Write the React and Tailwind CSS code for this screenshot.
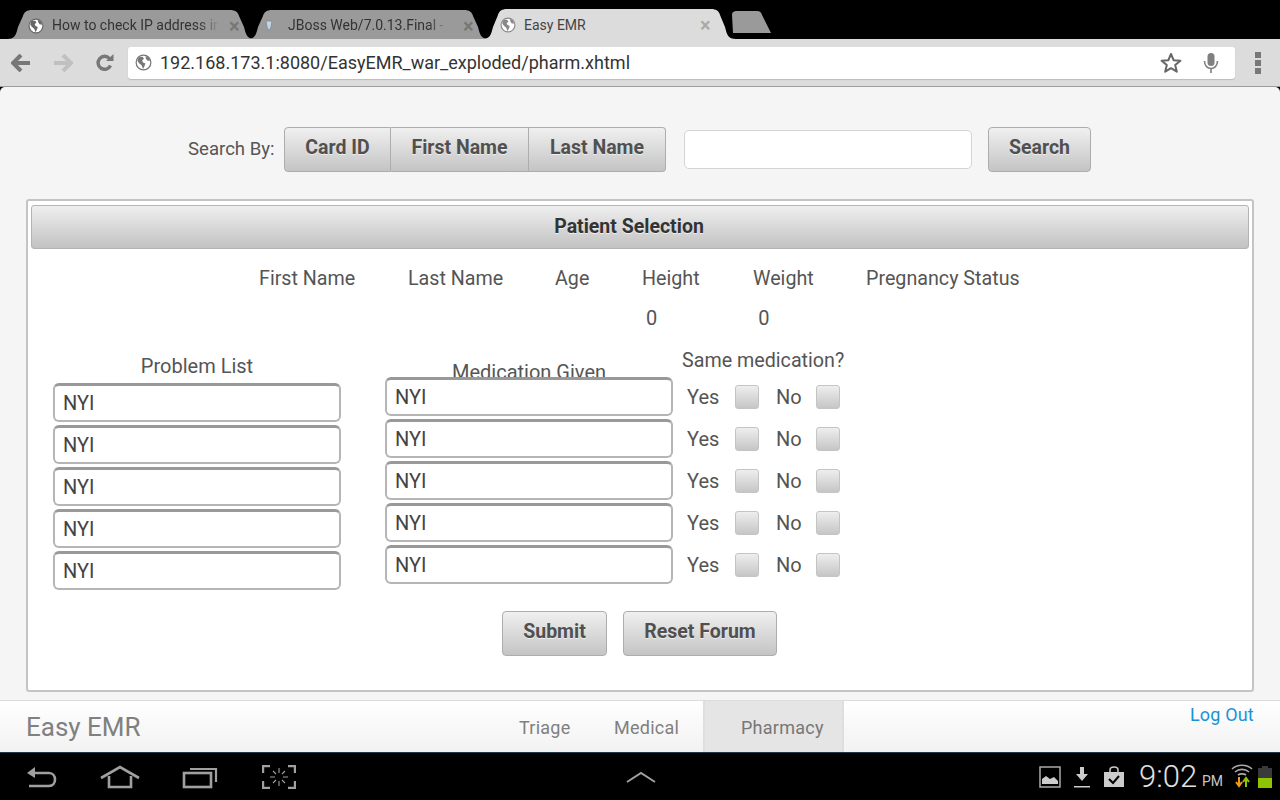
import React from "react";

const btn = "flex items-center justify-center h-[45px] pb-[3px] border border-[#adadad] bg-gradient-to-b from-[#f0f0f0] to-[#c4c4c4] text-[19.5px] font-bold text-[#505050] [text-shadow:0_1px_0_#eee]";

function Globe({ size = 18, color = "#7a7a7a" }) {
  return (
    <svg width={size} height={size} viewBox="0 0 18 18" className="shrink-0">
      <circle cx="9" cy="9" r="7.8" fill="#fff" stroke={color} strokeWidth="1.3" />
      <path d="M4 3.5 L8 3 L9.5 5 L7.5 7 L8.5 9 L11 10 L10 13 L8.5 16 L7 12 L4 9.5 L2.5 7 Z" fill={color} />
      <path d="M11 2 L14.5 4 L16 7.5 L13 7 L11.5 4.5 Z" fill={color} />
    </svg>
  );
}

function TabShape({ fill, w, h }) {
  return (
    <svg width={w} height={h} viewBox={`0 0 ${w} ${h}`} className="absolute left-0 top-0">
      <path d={`M0 ${h} C8 ${h} 9 ${h - 4} 11 ${h - 12} L16 7 C17 3 20 1 25 1 L${w - 25} 1 C${w - 20} 1 ${w - 17} 3 ${w - 16} 7 L${w - 11} ${h - 12} C${w - 9} ${h - 4} ${w - 8} ${h} ${w} ${h} Z`} fill={fill} />
    </svg>
  );
}

function Tab({ w, h, fill, left, pl, icon, title, titleClass, xClass, textW, gap }) {
  return (
    <div className="relative shrink-0" style={{ width: w, height: h, marginLeft: left }}>
      <TabShape fill={fill} w={w} h={h} />
      <div className="relative flex h-full items-center pt-[3px]" style={{ gap, paddingLeft: pl }}>
        {icon}
        <span className={`overflow-hidden whitespace-nowrap text-[14px] ${titleClass}`} style={{ width: textW }}>{title}</span>
        <span className={`text-[20px] leading-none font-bold ${xClass}`}>×</span>
      </div>
    </div>
  );
}

function Field({ children }) {
  return (
    <div className="relative z-10 flex h-[39px] w-[288px] items-center rounded-[6px] border-2 border-[#b5b5b5] border-t-[3px] border-t-[#999999] bg-white pl-[8px] text-[20px] text-[#444]">
      {children}
    </div>
  );
}

function Check() {
  return <div className="h-[24px] w-[24px] rounded-[3px] border border-[#c4c4c4] bg-gradient-to-b from-[#eeeeee] to-[#c6c6c6]" />;
}

function YesNo() {
  return (
    <div className="flex h-[38px] items-center text-[20px] text-[#555]">
      <span className="ml-[5px] w-[48px]">Yes</span>
      <Check />
      <span className="ml-[17px] w-[40px]">No</span>
      <Check />
    </div>
  );
}

const cols = [
  ["First Name", 228, 96],
  ["Last Name", 53, 95],
  ["Age", 52, 34],
  ["Height", 53, 58],
  ["Weight", 53, 61],
  ["Pregnancy Status", 52, 156],
];

const fade = "[mask-image:linear-gradient(to_right,black_88%,transparent)] text-[#333]";

export default function App() {
  return (
    <div className="flex h-[800px] w-[1280px] flex-col overflow-hidden bg-black text-[#555]" style={{ fontFamily: "Roboto, 'Noto Sans', sans-serif" }}>
      {/* tab strip */}
      <div className="flex h-[39px] shrink-0 items-end bg-black">
        <Tab w={248} h={30} fill="#9a9a9a" left={7} pl={21} gap={8} textW={167} icon={<Globe size={16} color="#666" />} title="How to check IP address in" titleClass={fade} xClass="text-[#777] ml-[2px]" />
        <Tab w={242} h={30} fill="#9a9a9a" left={-8} pl={18} gap={15} textW={160} icon={
          <svg width="8" height="12" viewBox="0 0 8 12" className="shrink-0"><path d="M1 1h6l-1 6-2 4-2-4z" fill="#c8d4dc" stroke="#7b8b96" strokeWidth="0.8" /></svg>
        } title="JBoss Web/7.0.13.Final - [" titleClass={fade} xClass="text-[#777]" />
        <Tab w={254} h={31} fill="#dcdcdc" left={-7} pl={18} gap={8} textW={168} icon={<Globe size={16} color="#888" />} title="Easy EMR" titleClass="text-[#444]" xClass="text-[#aaa]" />
        <svg width="42" height="24" viewBox="0 0 42 24" className="ml-[-5px] mb-[5px] shrink-0">
          <path d="M2 23 L1 5 C1 2 3 1 6 1 L26 1 C29 1 30 2 31 5 L40 23 Z" fill="#9a9a9a" />
        </svg>
      </div>

      {/* toolbar */}
      <div className="flex h-[48px] shrink-0 items-center border-b border-[#9c9c9c] bg-[#dcdcdc]">
        <svg width="20" height="18" viewBox="0 0 20 18" className="ml-[11px] shrink-0"><path d="M10 1 L2 9 L10 17 M2.5 9 H19" fill="none" stroke="#777" strokeWidth="4" /></svg>
        <svg width="20" height="18" viewBox="0 0 20 18" className="ml-[22px] shrink-0"><path d="M10 1 L18 9 L10 17 M17.5 9 H1" fill="none" stroke="#c0c0c0" strokeWidth="4" /></svg>
        <svg width="20" height="20" viewBox="0 0 20 20" className="ml-[22px] shrink-0"><path d="M15.5 12.5 A6.5 6.5 0 1 1 14.5 5.5" fill="none" stroke="#777" strokeWidth="3.4" /><path d="M11 8 H18.5 V1 Z" fill="#777" /></svg>
        <div className="ml-[13px] flex h-[32px] w-[1107px] shrink-0 items-center rounded-[3px] bg-white pl-[7px] shadow-[0_1px_1px_#bbb]">
          <Globe size={17} color="#777" />
          <span className="ml-[8px] text-[18px] text-[#333]">192.168.173.1:8080/EasyEMR_war_exploded/pharm.xhtml</span>
          <svg width="22" height="22" viewBox="0 0 22 22" className="ml-auto shrink-0"><path d="M11 2 L13.6 8.2 L20.4 8.7 L15.2 13.1 L16.8 19.7 L11 16.2 L5.2 19.7 L6.8 13.1 L1.6 8.7 L8.4 8.2 Z" fill="none" stroke="#666" strokeWidth="2" strokeLinejoin="round" /></svg>
          <svg width="16" height="22" viewBox="0 0 16 22" className="ml-[21px] mr-[16px] shrink-0">
            <rect x="4.5" y="1" width="7" height="13" rx="3.5" fill="#808080" />
            <path d="M1.5 9 C1.5 19 14.5 19 14.5 9" fill="none" stroke="#808080" strokeWidth="1.6" />
            <path d="M8 16 V21" stroke="#808080" strokeWidth="1.6" />
          </svg>
        </div>
        <div className="ml-[20px] flex flex-col gap-[2px]">
          <div className="h-[6px] w-[6px] bg-[#777]" />
          <div className="h-[6px] w-[6px] bg-[#777]" />
          <div className="h-[6px] w-[6px] bg-[#777]" />
        </div>
      </div>

      {/* page */}
      <div className="flex h-[613px] shrink-0 flex-col rounded-t-[5px] bg-[#f5f5f5] px-[26px]">
        <div className="mt-[40px] flex h-[45px] shrink-0 items-center">
          <span className="ml-[162px] w-[87px] whitespace-nowrap text-[18.6px] text-[#555]">Search By:</span>
          <div className={`${btn} ml-[9px] w-[107px] rounded-l-[4px]`}>Card ID</div>
          <div className={`${btn} w-[138px] border-l-0`}>First Name</div>
          <div className={`${btn} w-[137px] rounded-r-[4px] border-l-0`}>Last Name</div>
          <div className="ml-[18px] h-[39px] w-[288px] rounded-[5px] border border-[#d4d4d4] bg-white" />
          <div className={`${btn} ml-[16px] w-[103px] rounded-[4px]`}>Search</div>
        </div>

        <div className="mt-[27px] flex h-[493px] shrink-0 flex-col rounded-[3px] border-2 border-[#c4c4c4] bg-white px-[3px] pt-[4px]">
          <div className="flex h-[44px] shrink-0 items-center justify-center rounded-[3px] border border-[#b4b4b4] bg-gradient-to-b from-[#efefef] to-[#c2c2c2] pr-[22px] text-[19.5px] font-bold text-[#333] [text-shadow:0_1px_0_#eee]">
            Patient Selection
          </div>

          <div className="mt-[15px] flex h-[39px] shrink-0 text-[19.7px] text-[#555]">
            {cols.map(([label, ml, w]) => (
              <div key={label} className="shrink-0 whitespace-nowrap" style={{ marginLeft: ml, width: w }}>{label}</div>
            ))}
          </div>
          <div className="flex h-[28px] shrink-0 text-[20px] text-[#555]">
            <div className="ml-[615px] shrink-0">0</div>
            <div className="ml-[101px] shrink-0">0</div>
          </div>

          <div className="mt-[18px] flex shrink-0 items-start">
            {/* Problem list */}
            <div className="ml-[22px] flex w-[288px] shrink-0 flex-col">
              <div className="h-[34px] pt-[2px] text-center text-[20px] leading-[30px] text-[#555]">Problem List</div>
              <div className="flex flex-col gap-[3px]">
                {[0, 1, 2, 3, 4].map((i) => <Field key={i}>NYI</Field>)}
              </div>
            </div>
            {/* Medication given */}
            <div className="ml-[44px] flex w-[288px] shrink-0 flex-col">
              <div className="h-[28px] overflow-hidden pt-[8px] text-center text-[20px] leading-[30px] text-[#555]">Medication Given</div>
              <div className="flex flex-col gap-[3px]">
                {[0, 1, 2, 3, 4].map((i) => <Field key={i}>NYI</Field>)}
              </div>
            </div>
            {/* Same medication */}
            <div className="ml-[9px] flex shrink-0 flex-col">
              <div className="mt-[-1px] h-[26px] whitespace-nowrap text-[19.7px] leading-[26px] text-[#555]">Same medication?</div>
              <div className="mt-[4px] flex flex-col gap-[4px]">
                {[0, 1, 2, 3, 4].map((i) => <YesNo key={i} />)}
              </div>
            </div>
          </div>

          <div className="mt-[21px] flex shrink-0 pl-[471px]">
            <div className={`${btn} w-[105px] rounded-[4px]`}>Submit</div>
            <div className={`${btn} ml-[16px] w-[154px] rounded-[4px]`}>Reset Forum</div>
          </div>
        </div>
      </div>

      {/* footer */}
      <div className="flex h-[52px] shrink-0 border-t border-[#dcdcdc] bg-gradient-to-b from-white to-[#f2f2f2]">
        <div className="ml-[26px] w-[150px] pt-[9px] text-[26px] leading-[34px] text-[#808080]">Easy EMR</div>
        <div className="ml-[343px] w-[95px] pt-[15px] text-[18px] leading-[24px] tracking-[0.25px] text-[#808080]">Triage</div>
        <div className="w-[89px] pt-[15px] text-[18px] leading-[24px] tracking-[0.25px] text-[#808080]">Medical</div>
        <div className="w-[141px] border-x-2 border-x-[#dedede] bg-[#e5e5e5] pl-[36px] pt-[15px] text-[18px] leading-[24px] tracking-[0.25px] text-[#777]">Pharmacy</div>
        <div className="ml-[346px] pt-[2px] text-[18px] leading-[24px] tracking-[0.15px] text-[#1a93d6]">Log Out</div>
      </div>
      <div className="h-[1px] shrink-0 bg-[#1d3a46]" />

      {/* system bar */}
      <div className="flex h-[47px] shrink-0 items-center bg-black">
        <svg width="32" height="24" viewBox="0 0 32 24" className="ml-[25px] shrink-0"><path d="M10 2 L2 8 L10 13 Z" fill="#a0a0a0" /><path d="M8 8 H24 C32 8 32 21 24 21 H4" fill="none" stroke="#a0a0a0" strokeWidth="2.6" /></svg>
        <svg width="40" height="24" viewBox="0 0 40 24" className="ml-[43px] shrink-0"><path d="M1 13 L20 2 L39 13 M9 11 V22 H31 V11" fill="none" stroke="#a0a0a0" strokeWidth="2.6" /></svg>
        <svg width="36" height="24" viewBox="0 0 36 24" className="ml-[42px] shrink-0"><rect x="2" y="8" width="27" height="14" fill="none" stroke="#a0a0a0" strokeWidth="2.6" /><path d="M8 4 H34 V17" fill="none" stroke="#a0a0a0" strokeWidth="2.2" /></svg>
        <svg width="34" height="24" viewBox="0 0 34 24" className="ml-[44px] shrink-0">
          <path d="M1 8 V1 H8 M26 1 H33 V8 M1 16 V23 H8 M26 23 H33 V16" fill="none" stroke="#a0a0a0" strokeWidth="2.4" />
          <path d="M17 3 V8 M17 16 V21 M8 12 H13 M21 12 H26 M11 6 L14 9 M23 6 L20 9 M11 18 L14 15 M23 18 L20 15" stroke="#a0a0a0" strokeWidth="1.1" />
        </svg>
        <svg width="30" height="12" viewBox="0 0 30 12" className="ml-[330px] shrink-0"><path d="M1 11 L15 2 L29 11" fill="none" stroke="#a0a0a0" strokeWidth="2" /></svg>

        <svg width="22" height="22" viewBox="0 0 22 22" className="ml-[383px] shrink-0"><rect x="1" y="1" width="20" height="20" fill="none" stroke="#aaa" strokeWidth="1.5" /><path d="M3 18 V13 L7 10 L11 13 L15 11 L19 15 V18 Z" fill="#ccc" /></svg>
        <svg width="16" height="22" viewBox="0 0 16 22" className="ml-[13px] shrink-0"><path d="M6 1 H10 V8 H14 L8 15 L2 8 H6 Z M0 20 H16 V21.5 H0 Z" fill="#ccc" /></svg>
        <svg width="20" height="22" viewBox="0 0 20 22" className="ml-[14px] shrink-0"><path d="M0 6 H20 V21 H0 Z" fill="#ccc" /><path d="M6 7 V4 C6 0 14 0 14 4 V7" fill="none" stroke="#ccc" strokeWidth="1.5" /><path d="M5 13 L9 17 L15 10" fill="none" stroke="#000" strokeWidth="2" /></svg>
        <span className="ml-[15px] w-[58px] text-[31px] leading-none font-light text-[#e0e0e0]">9:02</span>
        <span className="ml-[5px] mt-[8px] w-[21px] text-[14px] leading-none text-[#c8c8c8]">PM</span>
        <svg width="22" height="26" viewBox="0 0 22 26" className="ml-[8px] shrink-0">
          <path d="M1 5 C6 0 16 0 21 5 M4 8 C8 4.5 14 4.5 18 8 M7 11 C9 9.5 13 9.5 15 11" fill="none" stroke="#aaa" strokeWidth="1.6" />
          <path d="M8 13 V21 M5 18 L8 22 L11 18" fill="none" stroke="#f29a1d" strokeWidth="2" />
          <path d="M15 23 V15 M12 18 L15 14 L18 18" fill="none" stroke="#8fc400" strokeWidth="2" />
        </svg>
        <div className="ml-[5px] flex shrink-0 flex-col items-center">
          <div className="h-[2px] w-[6px] bg-[#3a3a3a]" />
          <div className="flex h-[20px] w-[14px] flex-col justify-end bg-[#3a3a3a]">
            <div className="h-[10px] bg-[#8fc400]" />
          </div>
        </div>
      </div>
    </div>
  );
}
